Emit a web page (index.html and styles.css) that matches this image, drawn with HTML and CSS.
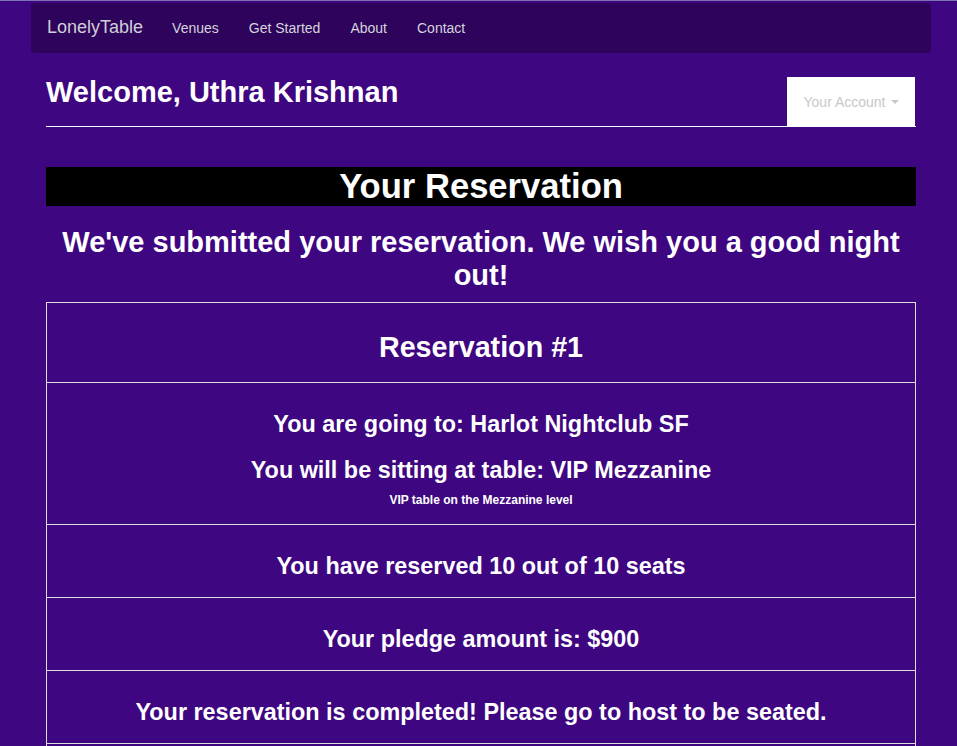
FILE: index.html
```html
<!DOCTYPE html>
<html>
<head>
<meta charset="utf-8">
<link rel="stylesheet" href="styles.css">
</head>
<body>
<nav class="navbar">
  <span class="brand">LonelyTable</span>
  <ul class="nav-links">
    <li>Venues</li>
    <li>Get Started</li>
    <li>About</li>
    <li>Contact</li>
  </ul>
</nav>
<main class="content">
  <header class="page-header">
    <h2 class="welcome">Welcome, Uthra Krishnan</h2>
    <button class="account">Your Account <span class="caret"></span></button>
  </header>
  <h1 class="title-bar">Your Reservation</h1>
  <h2 class="notice">We've submitted your reservation. We wish you a good night out!</h2>
  <table class="res-table">
    <tr><td><h2>Reservation #1</h2></td></tr>
    <tr><td>
      <h3>You are going to: Harlot Nightclub SF</h3>
      <h3>You will be sitting at table: VIP Mezzanine</h3>
      <p class="desc">VIP table on the Mezzanine level</p>
    </td></tr>
    <tr><td><h3>You have reserved 10 out of 10 seats</h3></td></tr>
    <tr><td><h3>Your pledge amount is: $900</h3></td></tr>
    <tr><td><h3>Your reservation is completed! Please go to host to be seated.</h3></td></tr>
    <tr><td><h3>&nbsp;</h3></td></tr>
  </table>
</main>
</body>
</html>
```
FILE: styles.css
```css
html, body {
  margin: 0;
  padding: 0;
}
body {
  background: #3e0680;
  font-family: "Liberation Sans", Arial, Helvetica, sans-serif;
  color: #fff;
  border-top: 1px solid #7d73b4;
  overflow: hidden;
  height: 745px;
}
.navbar {
  margin: 2px 26px 0 31px;
  height: 49px;
  background: #2e035b;
  border-radius: 4px;
  display: flex;
  align-items: center;
  padding-left: 16px;
  padding-bottom: 1px;
}
.brand {
  font-size: 18px;
  color: #cfcfd6;
  margin-right: 29px;
}
.nav-links {
  list-style: none;
  margin: 0;
  padding: 0;
  display: flex;
  gap: 30px;
  font-size: 14px;
  color: #d4d4dc;
}
.content {
  margin: 0 41px 0 46px;
}
.page-header {
  display: flex;
  justify-content: space-between;
  align-items: flex-start;
  border-bottom: 1px solid #fff;
  margin-top: 23px;
  height: 50px;
}
.welcome {
  margin: 0;
  font-size: 29px;
  line-height: 32px;
}
.account {
  background: #fff;
  border: 0;
  height: 49px;
  width: 128px;
  margin-top: 1px;
  margin-right: 1px;
  font-family: inherit;
  font-size: 14px;
  color: #c8c8c8;
  padding: 0;
  display: flex;
  align-items: center;
  justify-content: center;
  gap: 5px;
}
.caret {
  display: inline-block;
  border-top: 4px solid #c8c8c8;
  border-left: 4px solid transparent;
  border-right: 4px solid transparent;
  margin-top: 1px;
}
.title-bar {
  background: #000;
  margin: 40px 0 0;
  font-size: 34.6px;
  line-height: 39px;
  text-align: center;
}
.notice {
  text-align: center;
  font-size: 29px;
  line-height: 33px;
  margin: 20px 0 10px;
}
.res-table {
  width: 100%;
  border-collapse: collapse;
  text-align: center;
}
.res-table td {
  border: 1px solid #ddd;
  padding: 8px;
}
.res-table h2 {
  font-size: 28.7px;
  line-height: 33px;
  margin: 20px 0 10px;
}
.res-table h3 {
  font-size: 23.4px;
  line-height: 26px;
  margin: 20px 0 10px;
}
.res-table .desc {
  font-size: 12px;
  font-weight: bold;
  line-height: 14px;
  margin: 0 0 9px;
}
```
